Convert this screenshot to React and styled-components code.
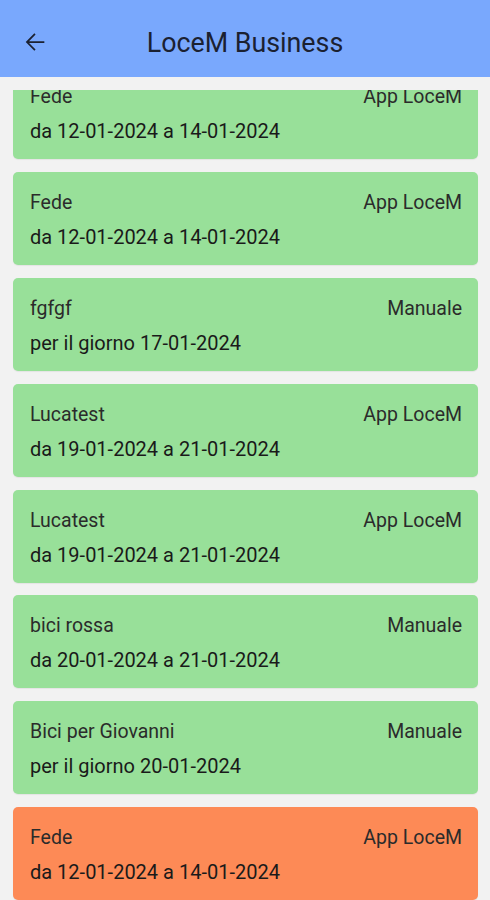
import React, { useLayoutEffect, useRef } from 'react';
import styled, { createGlobalStyle } from 'styled-components';

const bookings = [
  { name: 'Fede', source: 'App LoceM', period: 'da 12-01-2024 a 14-01-2024' },
  { name: 'Fede', source: 'App LoceM', period: 'da 12-01-2024 a 14-01-2024' },
  { name: 'fgfgf', source: 'Manuale', period: 'per il giorno 17-01-2024' },
  { name: 'Lucatest', source: 'App LoceM', period: 'da 19-01-2024 a 21-01-2024' },
  { name: 'Lucatest', source: 'App LoceM', period: 'da 19-01-2024 a 21-01-2024' },
  { name: 'bici rossa', source: 'Manuale', period: 'da 20-01-2024 a 21-01-2024' },
  { name: 'Bici per Giovanni', source: 'Manuale', period: 'per il giorno 20-01-2024' },
  { name: 'Fede', source: 'App LoceM', period: 'da 12-01-2024 a 14-01-2024', late: true },
];

const BackArrow = () => (
  <svg width="28" height="28" viewBox="0 0 24 24" fill="#1b2131">
    <path d="M20 11.25H6.9l5.6-5.6L11.45 4.6 4.05 12l7.4 7.4 1.05-1.05-5.6-5.6H20v-1.5z" />
  </svg>
);

const App = () => {
  const listRef = useRef(null);

  // la lista è già scrollata di qualche pixel
  useLayoutEffect(() => {
    if (listRef.current) listRef.current.scrollTop = 26;
  }, []);

  return (
    <Screen>
      <GlobalStyle />
      <AppBar>
        <BackButton>
          <BackArrow />
        </BackButton>
        <Title>LoceM Business</Title>
      </AppBar>
      <List ref={listRef}>
        {bookings.map((b, i) => (
          <Card key={i} $late={b.late}>
            <Row>
              <Name>{b.name}</Name>
              <Source>{b.source}</Source>
            </Row>
            <Period>{b.period}</Period>
          </Card>
        ))}
      </List>
    </Screen>
  );
};

const GlobalStyle = createGlobalStyle`
  html, body {
    margin: 0;
    padding: 0;
    background: #f2f2f2;
  }
  body {
    font-family: Roboto, "Liberation Sans", sans-serif;
  }
  * {
    box-sizing: border-box;
  }
`;

const Screen = styled.div`
  display: flex;
  flex-direction: column;
  height: 100vh;
  background: #f2f2f2;
`;

const AppBar = styled.header`
  position: relative;
  display: flex;
  align-items: center;
  justify-content: center;
  height: 77px;
  padding-top: 8px;
  background: #79a8fd;
  flex-shrink: 0;
`;

const BackButton = styled.div`
  position: absolute;
  left: 21px;
  top: 28px;
  display: flex;
  width: 28px;
  height: 28px;
`;

const Title = styled.h1`
  margin: 0;
  font-size: 26.8px;
  font-weight: 400;
  line-height: 32px;
  color: #1b2131;
`;

const List = styled.div`
  flex: 1;
  margin-top: 13px;
  padding: 0 12px 0 13px;
  overflow: hidden;
  display: flex;
  flex-direction: column;
  gap: 12.9px;
`;

const Card = styled.div`
  flex-shrink: 0;
  height: 93px;
  padding: 19px 16px 0 17px;
  border-radius: 5px;
  background: ${(p) => (p.$late ? '#fd8a56' : '#98e099')};
  box-shadow: 0 1px 1px rgba(0, 0, 0, 0.06);
  display: flex;
  flex-direction: column;
  gap: 10px;
`;

const Row = styled.div`
  display: flex;
  justify-content: space-between;
  align-items: center;
`;

const Name = styled.span`
  font-size: 19.5px;
  line-height: 24px;
  color: #2b2b2b;
`;

const Source = styled(Name)``;

const Period = styled.span`
  font-size: 20px;
  line-height: 24px;
  color: #1a1a1a;
`;

export default App;
